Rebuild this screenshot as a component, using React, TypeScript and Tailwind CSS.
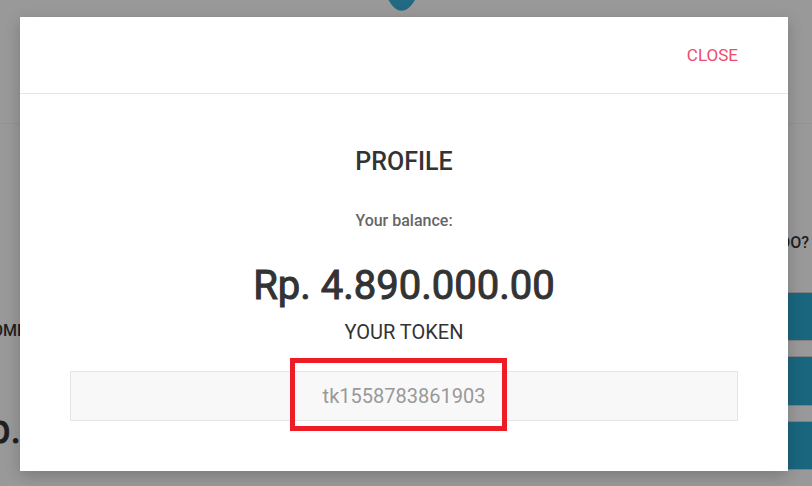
function Backdrop() {
  return (
    <div className="absolute inset-0 flex flex-col overflow-hidden bg-[#999999] text-[#1f1f1f]" aria-hidden="true">
      <header className="h-[124px] border-b border-[#939393] pr-2">
        <svg className="mx-auto block" width="32" height="12" viewBox="0 0 32 12" fill="#226a82">
          <path d="M2.500 0C6.500 6.500 10 10.800 15.500 10.800S25 6.500 29 0Z" />
        </svg>
      </header>
      <main className="flex flex-1 justify-between">
        <section className="-ml-2 pt-[195px]">
          <p className="text-base leading-6 font-medium">OME</p>
          <p className="-ml-1 pt-[62px] text-[40px] leading-[50px] [-webkit-text-stroke:1px]">p.</p>
        </section>
        <section className="flex w-[120px] flex-col pt-[107px]">
          <p className="pr-[3px] text-right text-base leading-6 font-medium">DO?</p>
          <div className="mt-[37px] flex flex-col gap-[15px]">
            <div className="h-[49px] border-y border-[#808080] bg-[#1a667f]" />
            <div className="h-[50px] border-y border-[#808080] bg-[#1a667f]" />
            <div className="h-[49px] border-y border-[#808080] bg-[#1a667f]" />
          </div>
        </section>
      </main>
    </div>
  );
}

export default function App() {
  return (
    <div className="relative min-h-screen overflow-hidden pt-[17px] pr-6 pb-[15px] pl-5 font-['Roboto',sans-serif]">
      <Backdrop />
      <div
        role="dialog"
        aria-labelledby="profile-title"
        className="relative bg-white shadow-[0_5px_15px_rgba(0,0,0,0.2)]"
      >
        <header className="flex h-[77px] items-center justify-end border-b border-[#e5e5e5] px-[50px]">
          <button type="button" className="text-[17px] leading-6 text-[#ee4b6e]">
            CLOSE
          </button>
        </header>
        <div className="px-[50px] pt-[50px] pb-[50px] text-center text-[#333333]">
          <h1 id="profile-title" className="text-[25px] leading-[36px] font-medium">
            PROFILE
          </h1>
          <p className="mt-[29px] text-base leading-6 font-medium text-[#666666]">Your balance:</p>
          <p className="mt-[28px] text-[40px] leading-[50px] [-webkit-text-stroke:1px]">Rp. 4.890.000.00</p>
          <label htmlFor="token" className="mt-[9px] block text-xl leading-6">
            YOUR TOKEN
          </label>
          <div className="relative mt-[27px]">
            <input
              id="token"
              readOnly
              value="tk1558783861903"
              className="block h-[50px] w-full border border-[#e5e5e5] bg-[#f8f8f8] text-center text-xl text-[#999999] outline-none"
            />
            <div className="pointer-events-none absolute inset-x-0 -top-[13px] flex justify-center pr-[11px]">
              <div className="h-[73px] w-[217px] border-[5px] border-[#ee1c25]" />
            </div>
          </div>
        </div>
      </div>
    </div>
  );
}
